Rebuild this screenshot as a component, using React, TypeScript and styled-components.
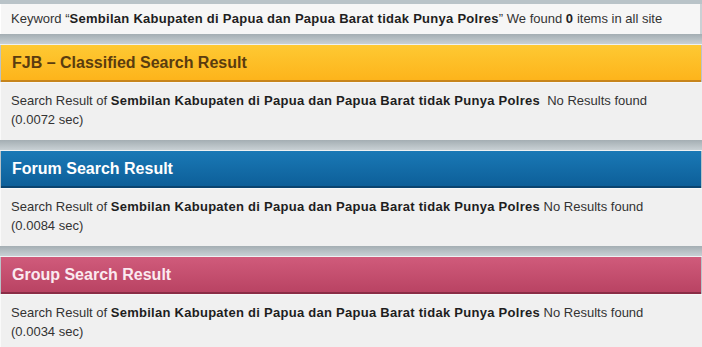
import React from "react";
import styled, { createGlobalStyle } from "styled-components";

const Global = createGlobalStyle`
  html, body { margin: 0; padding: 0; }
  body {
    background: #b9c3c8;
    font-family: "Liberation Sans", Arial, sans-serif;
    font-size: 13px;
    color: #333;
    width: 702px;
    height: 347px;
    overflow: hidden;
  }
`;

const Page = styled.div`
  padding-top: 4px;
  width: 702px;
`;

const KeywordBox = styled.div`
  height: 30px;
  box-sizing: border-box;
  background: #f6f6f6;
  border-left: 1px solid #ffffff;
  border-right: 2px solid #c9d0d4;
  padding: 7px 0 0 10px;
  line-height: 16px;
  color: #333;
  white-space: nowrap;
`;

const Strong = styled.b`
  color: #1e1e1e;
  letter-spacing: 0.27px;
`;

const Gap = styled.div`
  height: 10px;
  background: linear-gradient(#a4aeb3, #c8d0d4);
  border-bottom: 1px solid #eef1f2;
`;

type Theme = "orange" | "blue" | "pink";

const themes: Record<Theme, { top: string; bottom: string; border: string; text: string }> = {
  orange: { top: "#fec933", bottom: "#fdb41b", border: "#c7851c", text: "#5a3c0f" },
  blue: { top: "#1a79b6", bottom: "#0d5f99", border: "#0a4470", text: "#ffffff" },
  pink: { top: "#d05b7b", bottom: "#b94363", border: "#8a2d46", text: "#fbeaf0" },
};

const Header = styled.div<{ $theme: Theme }>`
  height: 37px;
  box-sizing: border-box;
  margin-left: 1px;
  margin-right: 1px;
  background: ${(p) => `linear-gradient(${themes[p.$theme].top}, ${themes[p.$theme].bottom})`};
  border-bottom: 2px solid ${(p) => themes[p.$theme].border};
  display: flex;
  align-items: center;
  padding: 0 0 0 11px;
  font-size: 16px;
  font-weight: bold;
  color: ${(p) => themes[p.$theme].text};
`;

const Body = styled.div`
  height: 58px;
  box-sizing: border-box;
  background: #f0f0f0;
  border-left: 1px solid #fafafa;
  border-top: 1px solid #f7f7f7;
  padding: 8px 0 0 10px;
  line-height: 19px;
  color: #333;
`;

const sections: { theme: Theme; title: string; time: string; sep: string }[] = [
  { theme: "orange", title: "FJB \u2013 Classified Search Result", time: "(0.0072 sec)", sep: "\u00a0 " },
  { theme: "blue", title: "Forum Search Result", time: "(0.0084 sec)", sep: " " },
  { theme: "pink", title: "Group Search Result", time: "(0.0034 sec)", sep: " " },
];

const KEY = "Sembilan Kabupaten di Papua dan Papua Barat tidak Punya Polres";

export default function App() {
  return (
    <Page>
      <Global />
      <KeywordBox>
        Keyword {"\u201c"}
        <Strong>{KEY}</Strong>
        {"\u201d"} We found <Strong>0</Strong> items in all site
      </KeywordBox>
      {sections.map((s) => (
        <React.Fragment key={s.title}>
          <Gap />
          <Header $theme={s.theme}>{s.title}</Header>
          <Body>
            Search Result of <Strong>{KEY}</Strong>
            {s.sep}No Results found
            <br />
            {s.time}
          </Body>
        </React.Fragment>
      ))}
    </Page>
  );
}
